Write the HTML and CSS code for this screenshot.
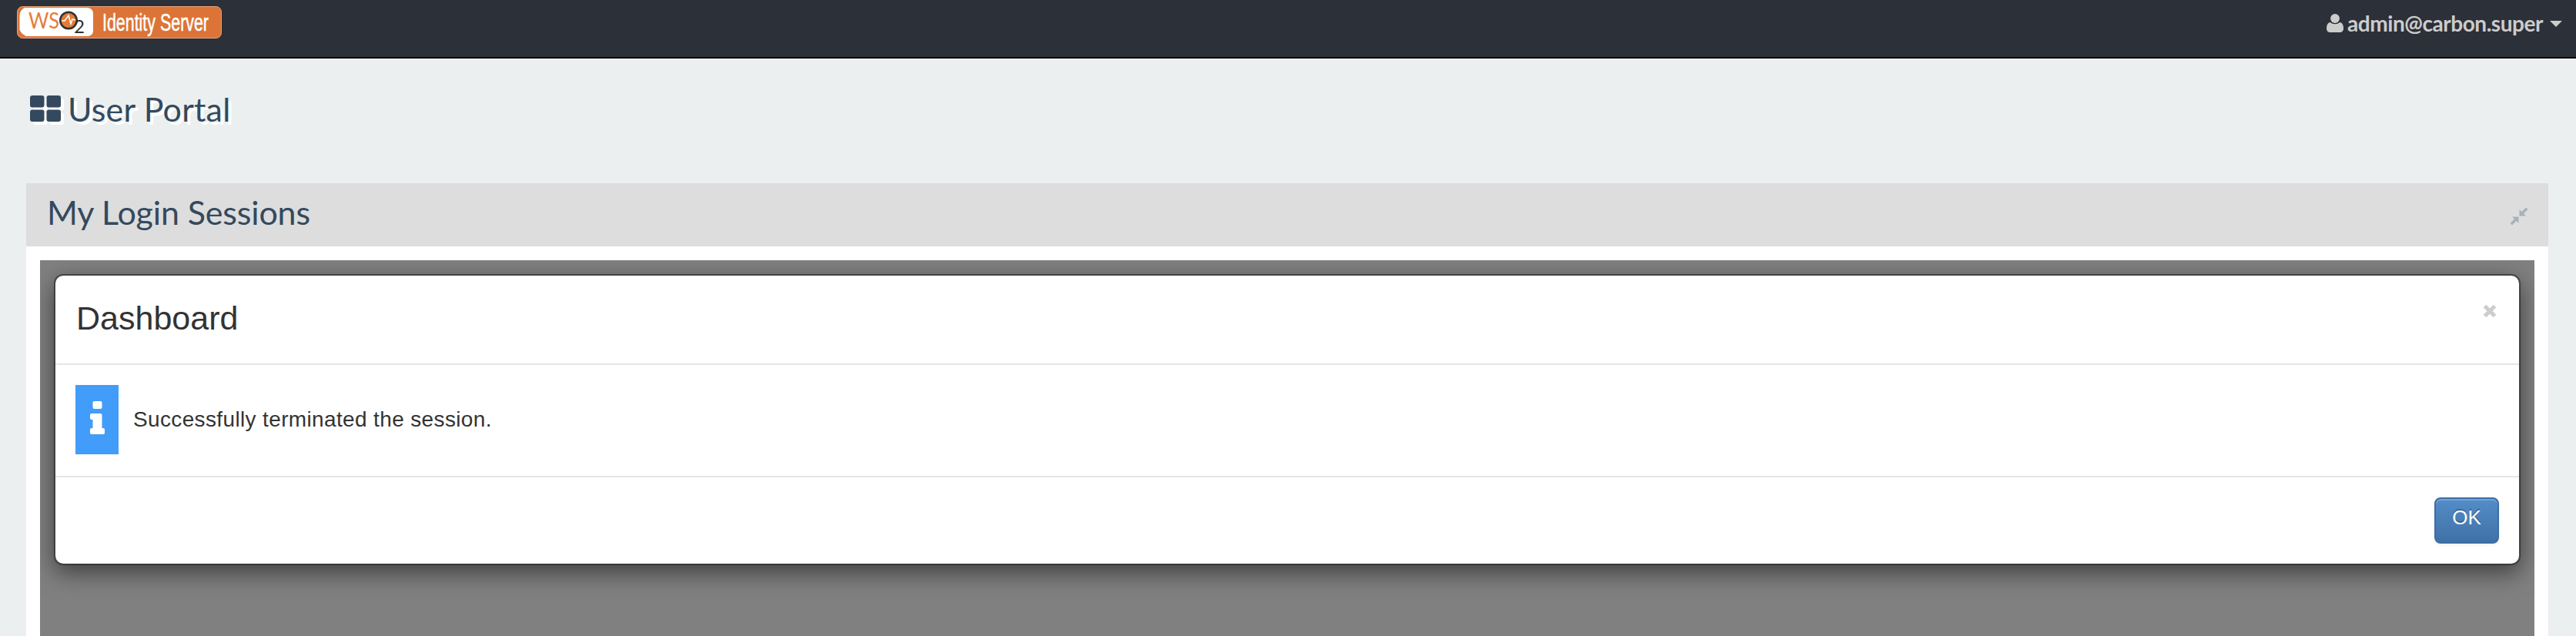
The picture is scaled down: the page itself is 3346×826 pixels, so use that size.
FILE: index.html
```html
<!DOCTYPE html>
<html lang="en">
<head>
<meta charset="utf-8">
<title>User Portal</title>
<link rel="stylesheet" href="styles.css">
</head>
<body>
<header class="navbar">
  <svg class="logo" width="266" height="42" viewBox="0 0 266 42" role="img" aria-label="WSO2 Identity Server">
    <rect x=".5" y=".5" width="265" height="41" rx="7" fill="#dc7437" stroke="#e9a37c"/>
    <path d="M10 2H92Q99 3 99 10V32Q99 38 92 39H12Q4 35 3.500 30V12Q4 5 10 2Z" fill="#fff"/>
    <text class="logo-ws" x="15" y="28.500" textLength="40" lengthAdjust="spacingAndGlyphs">WS</text>
    <circle cx="67" cy="18.500" r="10.700" fill="#e57c36" stroke="#2f3235" stroke-width="2.600"/>
    <path d="M58 19H62L65 15L67 12L70 23L72 17L76 18" fill="none" stroke="#fff" stroke-width="1.500"/>
    <text class="logo-two" x="74" y="35" textLength="14" lengthAdjust="spacingAndGlyphs">2</text>
    <text class="logo-name" x="111" y="32" textLength="138" lengthAdjust="spacingAndGlyphs">Identity Server</text>
  </svg>
  <div class="account">
    <svg width="22" height="24" viewBox="0 0 22 24" fill="currentColor"><path d="M5 11C2 11 0 14 0 19C0 22 2 24 5 24H17C20 24 22 22 22 19C22 14 20 11 17 11C14 14 8 14 5 11Z"/><circle cx="11" cy="6" r="5.900"/></svg>
    <span class="account-name">admin@carbon.super</span>
    <svg class="caret" width="16" height="8" viewBox="0 0 16 8" fill="currentColor"><path d="M0 0H16L8 8Z"/></svg>
  </div>
</header>
<main class="page">
  <h1 class="page-title">
    <svg class="grid-icon" width="40" height="34" viewBox="0 0 40 34" fill="currentColor"><rect width="18.500" height="15.500" rx="3"/><rect x="21.500" width="18.500" height="15.500" rx="3"/><rect y="18.500" width="18.500" height="15.500" rx="3"/><rect x="21.500" y="18.500" width="18.500" height="15.500" rx="3"/></svg>
    <span>User Portal</span>
  </h1>
  <section class="panel">
    <div class="panel-head">
      <h2 class="panel-title">My Login Sessions</h2>
      <svg class="collapse" width="24" height="24" viewBox="0 0 24 24" fill="currentColor"><path d="M12.500 3V11.500H21L18 8.500L23.500 3L21 .5L15.500 6ZM3 12.500H11.500V21L8.500 18L3 23.500L.5 21L6 15.500Z"/></svg>
    </div>
    <div class="gadget">
      <div class="modal">
        <div class="modal-head">
          <h3 class="modal-title">Dashboard</h3>
          <svg class="close" width="18" height="18" viewBox="0 0 18 18"><path d="M2.500 2.500L15.500 15.500M15.500 2.500L2.500 15.500" stroke="currentColor" stroke-width="5"/></svg>
        </div>
        <div class="modal-body">
          <span class="info"><svg width="19" height="43" viewBox="0 0 19 43" fill="#fff"><rect x="3.500" width="12" height="10" rx="2"/><path d="M2 16H13.500Q15.500 16 15.500 18V35H17Q19 35 19 37V41Q19 43 17 43H2Q0 43 0 41V37Q0 35 2 35H3.500V24H2Q0 24 0 22V18Q0 16 2 16Z"/></svg></span>
          <span class="message">Successfully terminated the session.</span>
        </div>
        <div class="modal-foot"><button class="ok">OK</button></div>
      </div>
    </div>
  </section>
</main>
</body>
</html>
```
FILE: styles.css
```css
* { box-sizing: border-box; }
body {
  margin: 0;
  height: 826px;
  overflow: hidden;
  display: flex;
  flex-direction: column;
  background: #ebeff0;
  color: #333;
  font-family: "Liberation Sans", Arial, sans-serif;
}
svg { display: block; flex: none; }
h1, h2, h3 { margin: 0; font-weight: 400; }

.navbar {
  flex: none;
  height: 76px;
  padding: 8px 18px 0 22px;
  display: flex;
  justify-content: space-between;
  align-items: flex-start;
  background: #2c3038;
  border-bottom: 2px solid #040406;
}
.logo { overflow: visible; }
.logo-ws { font: 28px Lato, sans-serif; fill: #e57c36; }
.logo-two { font: 23px Lato, sans-serif; fill: #2f3235; }
.logo-name {
  font: 31px "Liberation Sans Narrow", "Liberation Sans", sans-serif;
  fill: #fff;
  stroke: #fff;
  stroke-width: .5px;
}
.account {
  height: 43px;
  display: flex;
  align-items: center;
  color: #ccc;
}
.account-name {
  margin: 0 9px 0 5px;
  font: 700 28px/44px Lato, sans-serif;
  letter-spacing: -.45px;
}
.caret { margin-top: 3px; }

.page {
  flex: 1;
  min-height: 0;
  padding: 0 36px 0 34px;
  display: flex;
  flex-direction: column;
}
.page-title {
  flex: none;
  height: 162px;
  padding: 35px 0 0 5px;
  display: flex;
  align-items: flex-start;
  gap: 9px;
  color: #34495e;
  font: 400 43px/62px Lato, sans-serif;
  letter-spacing: .2px;
  text-shadow: 4px 4px 0 #fff;
}
.grid-icon { margin-top: 13px; overflow: visible; filter: drop-shadow(4px 4px 0 #fff); }

.panel {
  flex: 1;
  min-height: 0;
  display: flex;
  flex-direction: column;
  background: #fff;
}
.panel-head {
  flex: none;
  height: 82px;
  padding: 0 26px;
  display: flex;
  justify-content: space-between;
  align-items: center;
  background: #ddd;
}
.panel-title {
  padding: 0 0 7px 1px;
  color: #34495e;
  font: 400 43px/60px Lato, sans-serif;
  letter-spacing: -.15px;
}
.collapse { color: #a9b1b8; margin-top: 4px; }
.gadget {
  flex: 1;
  margin: 18px 18px 0;
  padding: 18px;
  background: #808080;
  overflow: hidden;
}
.modal {
  height: 378px;
  display: flex;
  flex-direction: column;
  border: 2px solid rgba(0, 0, 0, .42);
  border-radius: 12px;
  background: #fff;
  background-clip: padding-box;
  box-shadow: 0 10px 30px rgba(0, 0, 0, .5);
}
.modal-head {
  height: 116px;
  padding: 0 29px 0 26px;
  display: flex;
  justify-content: space-between;
  align-items: flex-start;
  border-bottom: 2px solid #e5e5e5;
}
.modal-title { padding: 25px 0 0 1px; font-size: 43px; line-height: 60px; }
.close { margin-top: 37px; color: #ccc; }
.modal-body {
  height: 144px;
  padding: 26px 26px 0;
  display: flex;
  align-items: flex-start;
  font-size: 28px;
  line-height: 89px;
  letter-spacing: .36px;
}
.info {
  width: 56px;
  height: 90px;
  margin-right: 19px;
  display: flex;
  align-items: center;
  justify-content: center;
  padding-bottom: 5px;
  background: #429cf9;
}
.modal-foot {
  height: 114px;
  padding: 26px;
  display: flex;
  justify-content: flex-end;
  border-top: 2px solid #e5e5e5;
}
.ok {
  width: 84px;
  height: 60px;
  padding: 0 0 8px;
  border: 2px solid #3b6ea5;
  border-radius: 8px;
  background: linear-gradient(#548dca, #3f71a5);
  box-shadow: inset 0 2px 0 rgba(255, 255, 255, .2), 0 2px 4px rgba(0, 0, 0, .05);
  color: #fff;
  font: 26px/48px "Liberation Sans", Arial, sans-serif;
  text-shadow: 0 -2px 0 rgba(0, 0, 0, .25);
}
```
